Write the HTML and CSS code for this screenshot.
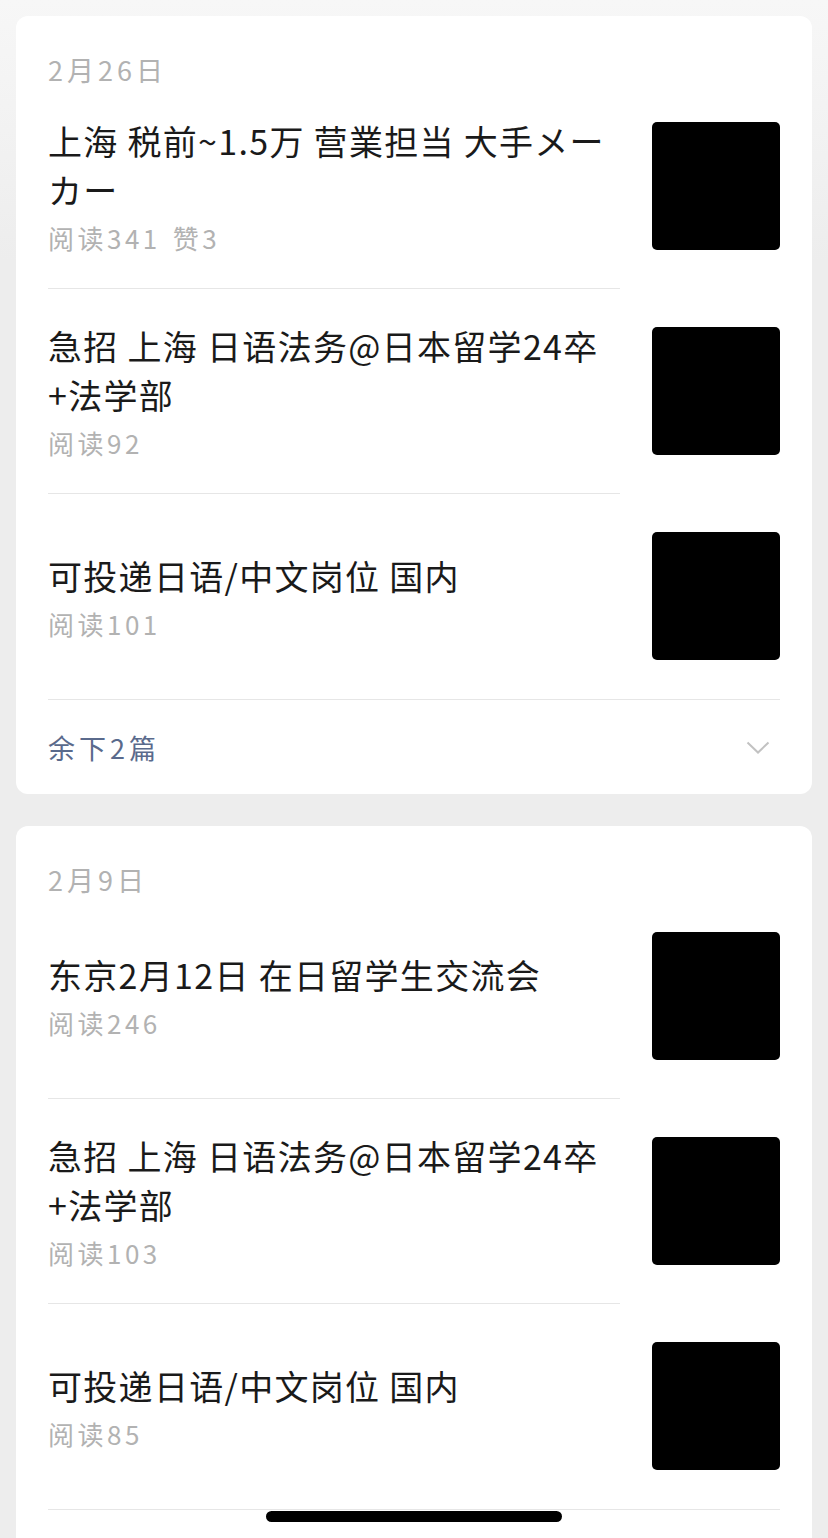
FILE: index.html
```html
<!DOCTYPE html>
<html lang="zh-CN">
<head>
<meta charset="utf-8">
<title>文章列表</title>
<link rel="stylesheet" href="styles.css">
</head>
<body>
<div class="page">
  <section class="card">
    <div class="date">2月26日</div>
    <div class="list">
      <div class="item">
        <div class="text">
          <div class="title">上海 税前~1.5万 营業担当 大手メーカー</div>
          <div class="meta"><span>阅读341</span><span>赞3</span></div>
        </div>
        <div class="thumb"></div>
      </div>
      <div class="item">
        <div class="text">
          <div class="title">急招 上海 日语法务@日本留学24卒+法学部</div>
          <div class="meta"><span>阅读92</span></div>
        </div>
        <div class="thumb"></div>
      </div>
      <div class="item">
        <div class="text">
          <div class="title">可投递日语/中文岗位 国内</div>
          <div class="meta"><span>阅读101</span></div>
        </div>
        <div class="thumb"></div>
      </div>
    </div>
    <div class="more">
      <span class="more-label">余下2篇</span>
      <svg class="chevron" width="24" height="13" viewBox="0 0 24 13"><polyline points="1.5,1.5 12,11.5 22.5,1.5" fill="none" stroke="#c2c2c2" stroke-width="2"/></svg>
    </div>
  </section>

  <section class="card card-open">
    <div class="date">2月9日</div>
    <div class="list">
      <div class="item">
        <div class="text">
          <div class="title">东京2月12日 在日留学生交流会</div>
          <div class="meta"><span>阅读246</span></div>
        </div>
        <div class="thumb"></div>
      </div>
      <div class="item">
        <div class="text">
          <div class="title">急招 上海 日语法务@日本留学24卒+法学部</div>
          <div class="meta"><span>阅读103</span></div>
        </div>
        <div class="thumb"></div>
      </div>
      <div class="item">
        <div class="text">
          <div class="title">可投递日语/中文岗位 国内</div>
          <div class="meta"><span>阅读85</span></div>
        </div>
        <div class="thumb"></div>
      </div>
    </div>
  </section>
</div>
<div class="home-indicator"></div>
</body>
</html>
```
FILE: styles.css
```css
html, body {
  margin: 0;
  padding: 0;
}
body {
  background: linear-gradient(#f7f7f7 0, #ededed 260px, #ededed 100%);
  font-family: "Noto Sans CJK SC", "Noto Sans", sans-serif;
  -webkit-font-smoothing: antialiased;
}
.page {
  padding: 16px;
  display: flex;
  flex-direction: column;
  gap: 32px;
}
.card {
  background: #ffffff;
  border-radius: 12px;
  padding: 0 32px;
}
.card-open {
  padding-bottom: 60px;
}
.date {
  padding-top: 38px;
  height: 30px;
  line-height: 32px;
  font-size: 27px;
  letter-spacing: 4px;
  color: #b2b2b2;
}
.list {
  border-bottom: 1px solid #e6e6e6;
}
.item {
  display: flex;
  align-items: stretch;
}
.text {
  flex: 1;
  min-width: 0;
  border-bottom: 1px solid #e6e6e6;
  display: flex;
  flex-direction: column;
  justify-content: center;
  margin-right: 32px;
}
.item:last-child .text {
  border-bottom: none;
}
.title {
  font-size: 34px;
  line-height: 49px;
  letter-spacing: 1.3px;
  color: #1a1a1a;
  word-break: break-all;
}
.meta {
  margin-top: 5px;
  font-size: 26px;
  line-height: 38px;
  letter-spacing: 3.5px;
  color: #b2b2b2;
  display: flex;
  gap: 12px;
}
.thumb {
  flex: none;
  width: 128px;
  height: 128px;
  margin: 38px 0 39px;
  align-self: center;
  background: #000000;
  border-radius: 5px;
}
.more {
  height: 94px;
  display: flex;
  align-items: center;
  justify-content: space-between;
}
.more-label {
  font-size: 27px;
  letter-spacing: 4px;
  color: #5a6a8c;
}
.chevron {
  margin-right: 10px;
}
.home-indicator {
  position: fixed;
  left: 266px;
  bottom: 16px;
  width: 296px;
  height: 11px;
  border-radius: 6px;
  background: #000000;
}
```
